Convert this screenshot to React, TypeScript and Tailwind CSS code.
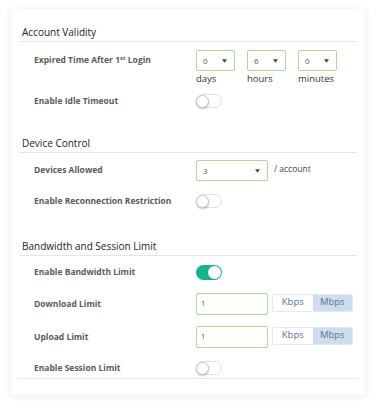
import React from 'react';

const font = { fontFamily: '"Open Sans", "Noto Sans", sans-serif' };

const Caret = () => (
  <svg width="5" height="4" viewBox="0 0 6 4" className="text-[#444]">
    <path d="M0 0h6L3 4z" fill="currentColor" />
  </svg>
);

const Select: React.FC<{ value: string; width: string }> = ({ value, width }) => (
  <div
    className={`${width} h-[21px] border-[1.5px] border-[#a9dc8e] rounded-[2px] flex items-center justify-between pl-[6px] pr-[7px] text-[8px] text-[#555] bg-white`}
  >
    <span>{value}</span>
    <Caret />
  </div>
);

const Toggle: React.FC<{ on?: boolean }> = ({ on }) =>
  on ? (
    <div className="w-[26px] h-[15px] rounded-full bg-[#17b38a] flex items-center justify-end pr-[1px]">
      <div className="w-[13px] h-[13px] rounded-full bg-white" />
    </div>
  ) : (
    <div className="w-[26px] h-[14px] rounded-full bg-white border border-[#e2e2e2] flex items-center">
      <div className="w-[13px] h-[13px] rounded-full bg-white border border-[#c8c8c8] shadow-[0_1px_2px_rgba(0,0,0,0.25)] -ml-[1px]" />
    </div>
  );

const Unit = () => (
  <div className="flex w-[81px] h-[18px] border border-[#e3e9f2] rounded-[2px] text-[9.5px] text-[#587496] overflow-hidden">
    <div className="flex-1 flex items-center justify-center bg-white">Kbps</div>
    <div className="flex-1 flex items-center justify-center bg-[#cfdcee]">Mbps</div>
  </div>
);

const Input: React.FC<{ value: string }> = ({ value }) => (
  <div className="w-[72px] h-[22px] border-[1.5px] border-[#a9dc8e] rounded-[2px] flex items-center pl-[4px] text-[7.5px] text-[#555] bg-white">
    {value}
  </div>
);

const Heading: React.FC<{ children: React.ReactNode }> = ({ children }) => (
  <div className="h-[17px] border-b border-[#e4e4e4] pl-[3px] text-[10px] leading-[15px] text-[#222]">
    {children}
  </div>
);

const Label: React.FC<{ children: React.ReactNode; className?: string }> = ({ children, className = '' }) => (
  <div className={`w-[177px] shrink-0 pl-[15px] text-[8.5px] font-bold text-[#5a5a5a] ${className}`}>{children}</div>
);

export default function App() {
  return (
    <div className="w-[376px] h-[408px] bg-white pt-[9px] pl-[11px]" style={font}>
      <div className="w-[354px] h-[386px] bg-white rounded-[4px] shadow-[0_1px_8px_rgba(0,0,0,0.09)] px-[8px] pt-[16px]">
        {/* Account Validity */}
        <Heading>Account Validity</Heading>
        <div className="flex mt-[8px]">
          <Label className="pt-[4px]">
            Expired Time After 1<sup className="text-[6px]">st</sup> Login
          </Label>
          <div className="flex">
            {[
              ['0', 'days'],
              ['6', 'hours'],
              ['0', 'minutes'],
            ].map(([v, u], i) => (
              <div key={u} className={i > 0 ? 'ml-[12px]' : ''}>
                <Select value={v} width="w-[39px]" />
                <div className="text-[9.5px] leading-[13px] text-[#333] mt-[1px]">{u}</div>
              </div>
            ))}
          </div>
        </div>
        <div className="flex items-center mt-[9px] h-[14px]">
          <Label>Enable Idle Timeout</Label>
          <Toggle />
        </div>

        {/* Device Control */}
        <div className="mt-[28px]">
          <Heading>Device Control</Heading>
        </div>
        <div className="flex items-center mt-[7px]">
          <Label>Devices Allowed</Label>
          <Select value="3" width="w-[72px]" />
          <span className="ml-[6px] text-[8.5px] text-[#444] -mt-[3px]">/ account</span>
        </div>
        <div className="flex items-center mt-[13px] h-[14px]">
          <Label>Enable Reconnection Restriction</Label>
          <Toggle />
        </div>

        {/* Bandwidth and Session Limit */}
        <div className="mt-[31px]">
          <Heading>Bandwidth and Session Limit</Heading>
        </div>
        <div className="flex items-center mt-[9px] h-[15px]">
          <Label>Enable Bandwidth Limit</Label>
          <Toggle on />
        </div>
        <div className="flex items-center mt-[13px]">
          <Label>Download Limit</Label>
          <Input value="1" />
          <div className="ml-[4px] -mt-[3px]">
            <Unit />
          </div>
        </div>
        <div className="flex items-center mt-[11px]">
          <Label>Upload Limit</Label>
          <Input value="1" />
          <div className="ml-[4px] -mt-[3px]">
            <Unit />
          </div>
        </div>
        <div className="flex items-center mt-[13px] h-[14px] border-b border-[#e4e4e4] box-content pb-[3px]">
          <Label>Enable Session Limit</Label>
          <Toggle />
        </div>
      </div>
    </div>
  );
}
